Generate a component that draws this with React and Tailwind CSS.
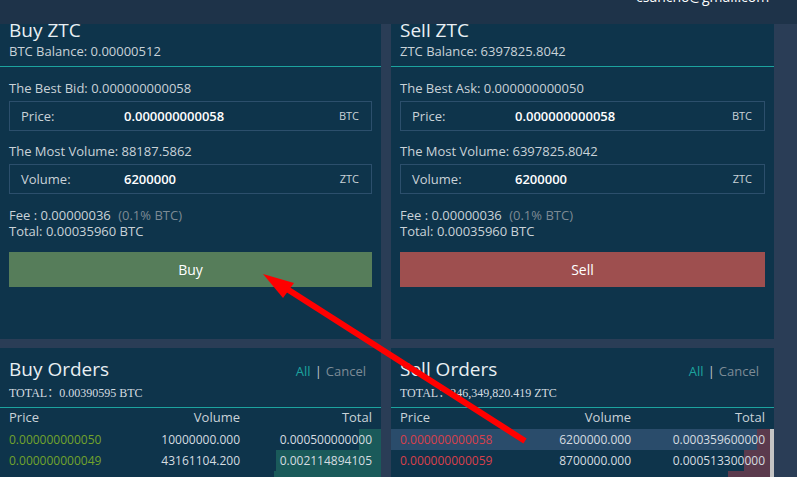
import React from "react";

const buyRows = [
  { price: "0.000000000050", volume: "10000000.000", total: "0.000500000000", bar: 22 },
  { price: "0.000000000049", volume: "43161104.200", total: "0.002114894105", bar: 105 },
  { price: "0.000000000048", volume: "44000000.000", total: "0.002112000000", bar: 107 },
];

const sellRows = [
  { price: "0.000000000058", volume: "6200000.000", total: "0.000359600000", bar: 13, active: true },
  { price: "0.000000000059", volume: "8700000.000", total: "0.000513300000", bar: 26 },
  { price: "0.000000000060", volume: "9800000.000", total: "0.000588000000", bar: 42 },
];

function Field({ label, value, unit }) {
  return (
    <div className="mt-[6px] flex h-[30px] items-center border border-[#2c4f6c] text-[13px] leading-[16px]">
      <span className="w-[114px] pl-[11px] text-[#c9d2d8]">{label}</span>
      <span className="flex-1 font-semibold text-white">{value}</span>
      <span className="pr-[12px] text-[11px] text-[#c9d2d8]">{unit}</span>
    </div>
  );
}

function TradePanel({ title, balance, bestLabel, best, most, button, buttonClass }) {
  return (
    <div className="flex h-[315px] flex-col overflow-hidden bg-[#0e344b] text-[#c9d2d8]">
      <div className="border-b border-[#1ca39e] px-[9px] pb-[7px]">
        <h2 className="-mt-[4px] text-[19px] leading-[20px] text-[#e9eff3]">{title}</h2>
        <p className="mt-[3px] text-[13px] leading-[16px]">{balance}</p>
      </div>
      <div className="px-[9px]">
        <p className="mt-[13px] text-[13px] leading-[16px]">
          {bestLabel}: {best}
        </p>
        <div className="-mt-[1px]">
          <Field label="Price:" value="0.000000000058" unit="BTC" />
        </div>
        <p className="mt-[12px] text-[13px] leading-[16px]">The Most Volume: {most}</p>
        <div className="-mt-[1px]">
          <Field label="Volume:" value="6200000" unit="ZTC" />
        </div>
        <p className="mt-[13px] text-[13px] leading-[16px]">
          Fee : 0.00000036 <span className="ml-[4px] text-[#7d8a94]">(0.1% BTC)</span>
        </p>
        <p className="text-[13px] leading-[16px]">Total: 0.00035960 BTC</p>
        <button
          className={`mt-[13px] flex h-[35px] w-full items-center justify-center text-[14px] text-white ${buttonClass}`}
        >
          {button}
        </button>
      </div>
    </div>
  );
}

function OrdersPanel({ title, total, rows, priceClass, barClass, scroll }) {
  return (
    <div className="flex h-[129px] flex-col overflow-hidden bg-[#0e344b] text-[#c9d2d8]">
      <div className="border-b border-[#1ca39e] pb-[7px] pl-[9px] pr-[15px]">
        <div className="mt-[11px] flex items-baseline justify-between">
          <h2 className="text-[19px] leading-[20px] text-[#e9eff3]">{title}</h2>
          <div className="text-[13px] leading-[16px]">
            <span className="text-[#1ca39e]">All</span>
            <span className="mx-[4px] text-[#c0c9ce]">|</span>
            <span className="text-[#7d8b96]">Cancel</span>
          </div>
        </div>
        <p className="mt-[7px] font-['Liberation_Serif','Noto_Sans_CJK_SC',serif] text-[12px] leading-[14px] text-[#d5dce0]">
          {total}
        </p>
      </div>
      <div className="mb-[4px] mt-[1px] flex pl-[9px] pr-[9px] text-[13px] leading-[16px]">
        <span className="w-[100px]">Price</span>
        <span className="w-[131px] text-right">Volume</span>
        <span className="flex-1 text-right">Total</span>
      </div>
      <div className="relative flex-1">
        {rows.map((r) => (
          <div
            key={r.price}
            className={`relative flex h-[21px] items-center text-[12px] leading-[16px] ${scroll ? "mr-[4px] pr-[5px]" : "pr-[9px]"} pl-[9px] ${r.active ? "bg-[#2a4c6b]" : ""}`}
          >
            <div className={`absolute right-0 top-0 h-full ${barClass}`} style={{ width: r.bar }} />
            <span className={`relative w-[100px] ${priceClass}`}>{r.price}</span>
            <span className="relative w-[131px] text-right text-[#d5dce0]">{r.volume}</span>
            <span className="relative flex-1 text-right text-[#d5dce0]">{r.total}</span>
          </div>
        ))}
        {scroll && <div className="absolute right-0 top-0 h-full w-[4px] bg-[#c4c4c4]" />}
      </div>
    </div>
  );
}

export default function App() {
  return (
    <div className="relative h-[477px] w-[797px] overflow-hidden bg-[#2a3d56] font-['Open_Sans',sans-serif]">
      <div className="relative h-[24px] overflow-hidden bg-[#1e3349]">
        <span className="absolute left-[636px] top-[-11px] text-[14px] leading-[16px] text-white">
          csancho@gmail.com
        </span>
      </div>
      <div className="grid w-[774px] grid-cols-[381px_383px] gap-x-[10px] gap-y-[9px]">
        <TradePanel
          title="Buy ZTC"
          balance="BTC Balance: 0.00000512"
          bestLabel="The Best Bid"
          best="0.000000000058"
          most="88187.5862"
          button="Buy"
          buttonClass="bg-[#567d5a]"
        />
        <TradePanel
          title="Sell ZTC"
          balance="ZTC Balance: 6397825.8042"
          bestLabel="The Best Ask"
          best="0.000000000050"
          most="6397825.8042"
          button="Sell"
          buttonClass="bg-[#9e4f4f]"
        />
        <OrdersPanel
          title="Buy Orders"
          total="TOTAL：0.00390595 BTC"
          rows={buyRows}
          priceClass="text-[#72a32c]"
          barClass="bg-[#1a5a5a]"
        />
        <OrdersPanel
          title="Sell Orders"
          total="TOTAL：246,349,820.419 ZTC"
          rows={sellRows}
          priceClass="text-[#d8404b]"
          barClass="bg-[#5b3a4d]"
          scroll
        />
      </div>
      <svg className="pointer-events-none absolute left-0 top-0" width="797" height="477">
        <line x1="287" y1="289" x2="525" y2="441" stroke="#ff0000" strokeWidth="6" />
        <polygon points="263,274 294,283 283,298" fill="#ff0000" />
      </svg>
    </div>
  );
}
